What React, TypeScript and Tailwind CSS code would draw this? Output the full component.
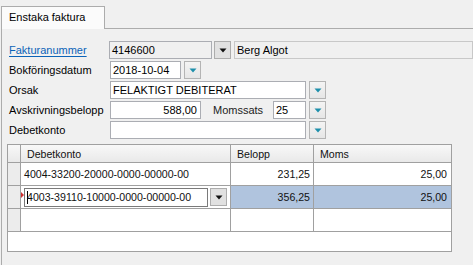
import React from "react";

function Arrow({ color }: { color: string }) {
  return (
    <svg width="8" height="5" viewBox="0 0 8 5">
      <polygon points="0.5,0.5 7.5,0.5 4,4.5" fill={color} />
    </svg>
  );
}

function DropBtn({ dark, cls }: { dark?: boolean; cls?: string }) {
  return (
    <div
      className={
        "h-[18px] w-[17px] flex items-center justify-center border " +
        (dark
          ? "border-[#adadad] bg-[#e1e1e1] "
          : "border-[#b4b4b4] bg-gradient-to-b from-[#f4f4f4] to-[#e6e6e6] ") +
        (cls ?? "")
      }
    >
      <Arrow color={dark ? "#111111" : "#1e8fab"} />
    </div>
  );
}

export default function App() {
  const input = "h-[18px] border border-[#abadb3] bg-white flex items-center px-[2px] text-[11px] text-black";
  return (
    <div className="w-[473px] h-[265px] bg-[#f0f0f0] overflow-hidden font-['Liberation_Sans',Arial,sans-serif] text-[11px] text-black leading-none">
      {/* tab strip */}
      <div className="flex pt-[6px] pl-[1px] h-[29px]">
        <div className="w-[104px] h-[23px] border border-b-0 border-[#acacac] bg-[#fbfbfb] pl-[7px] flex items-center pb-[1px]">
          Enstaka faktura
        </div>
        <div className="flex-1 border-b border-[#acacac]" />
      </div>
      {/* panel */}
      <div className="ml-[1px] border-l border-[#acacac] h-[236px] pt-[12px]">
        <div className="flex flex-col gap-[2px] pl-[7px]">
          {/* row 1 */}
          <div className="flex items-center h-[18px]">
            <div className="w-[100px]">
              <span className="text-[#0b63b8] underline underline-offset-2">Fakturanummer</span>
            </div>
            <div className={"w-[103px] h-[18px] border border-[#abadb3] bg-[#f0f0f0] flex items-center px-[2px]"}>4146600</div>
            <DropBtn dark cls="ml-[2px]" />
            <div className="ml-[3px] w-[239px] h-[18px] border border-[#c8c8c8] bg-[#f0f0f0] flex items-center px-[2px]">Berg Algot</div>
          </div>
          {/* row 2 */}
          <div className="flex items-center h-[18px]">
            <div className="w-[101px]">Bokföringsdatum</div>
            <div className={input + " w-[71px]"}>2018-10-04</div>
            <DropBtn cls="ml-[3px] w-[16px]" />
          </div>
          {/* row 3 */}
          <div className="flex items-center h-[18px]">
            <div className="w-[101px]">Orsak</div>
            <div className={input + " w-[196px]"}>FELAKTIGT DEBITERAT</div>
            <DropBtn cls="ml-[3px]" />
          </div>
          {/* row 4 */}
          <div className="flex items-center h-[18px]">
            <div className="w-[101px]">Avskrivningsbelopp</div>
            <div className={input + " w-[91px] justify-end pr-[3px]"}>588,00</div>
            <div className="w-[72px] pl-[12px] text-[#222]">Momssats</div>
            <div className={input + " w-[33px]"}>25</div>
            <DropBtn cls="ml-[3px]" />
          </div>
          {/* row 5 */}
          <div className="flex items-center h-[18px]">
            <div className="w-[101px]">Debetkonto</div>
            <div className={input + " w-[196px]"}></div>
            <DropBtn cls="ml-[3px]" />
          </div>
        </div>

        {/* grid */}
        <div className="ml-[5px] mt-[5px] w-[445px] h-[108px] border border-[#a0a0a0] bg-white text-[10.6px] text-[#111]">
          {/* header */}
          <div className="flex h-[18px]">
            <div className="w-[13px] border-r border-b border-[#a0a0a0] bg-gradient-to-b from-[#f8f8f8] to-[#e9e9e9]" />
            <div className="w-[210px] border-r border-b border-[#a0a0a0] bg-gradient-to-b from-[#f8f8f8] to-[#e9e9e9] flex items-center pl-[6px] pt-[1px]">Debetkonto</div>
            <div className="w-[83px] border-r border-b border-[#a0a0a0] bg-gradient-to-b from-[#f8f8f8] to-[#e9e9e9] flex items-center pl-[6px] pt-[1px]">Belopp</div>
            <div className="w-[137px] border-b border-[#a0a0a0] bg-gradient-to-b from-[#f8f8f8] to-[#e9e9e9] flex items-center pl-[6px] pt-[1px]">Moms</div>
          </div>
          {/* row 1 */}
          <div className="flex h-[23px]">
            <div className="w-[13px] border-r border-b border-[#a0a0a0] bg-[#ececec]" />
            <div className="w-[210px] border-r border-b border-[#a0a0a0] flex items-center pl-[3px]">4004-33200-20000-0000-00000-00</div>
            <div className="w-[83px] border-r border-b border-[#a0a0a0] flex items-center justify-end pr-[3px]">231,25</div>
            <div className="w-[137px] border-b border-[#a0a0a0] flex items-center justify-end pr-[4px]">25,00</div>
          </div>
          {/* row 2 (editing) */}
          <div className="flex h-[23px]">
            <div className="w-[13px] border-r border-b border-[#a0a0a0] bg-[#ececec]" />
            <div className="relative w-[210px] border-r border-b border-[#a0a0a0] flex items-center pl-[3px]">
              <div className="absolute left-0 top-[6px] w-0 h-0 border-y-[3px] border-y-transparent border-l-[3px] border-l-[#d03030]" />
              <div className="w-[184px] h-[19px] border border-[#7a7a7a] bg-white flex items-center pl-[2px]">
                <span className="border-l border-black h-[13px] mr-[-1px]" />
                <span>4003-39110-10000-0000-00000-00</span>
              </div>
              <div className="ml-[2px] w-[17px] h-[18px] border border-[#adadad] bg-[#e1e1e1] flex items-center justify-center">
                <Arrow color="#111111" />
              </div>
            </div>
            <div className="w-[83px] border-r border-b border-[#a0a0a0] bg-[#b0c4de] flex items-center justify-end pr-[3px]">356,25</div>
            <div className="w-[137px] border-b border-[#a0a0a0] bg-[#b0c4de] flex items-center justify-end pr-[4px]">25,00</div>
          </div>
          {/* row 3 */}
          <div className="flex h-[23px]">
            <div className="w-[13px] border-r border-b border-[#a0a0a0] bg-[#ececec]" />
            <div className="w-[210px] border-r border-b border-[#a0a0a0]" />
            <div className="w-[83px] border-r border-b border-[#a0a0a0]" />
            <div className="w-[137px] border-b border-[#a0a0a0]" />
          </div>
        </div>
      </div>
    </div>
  );
}
